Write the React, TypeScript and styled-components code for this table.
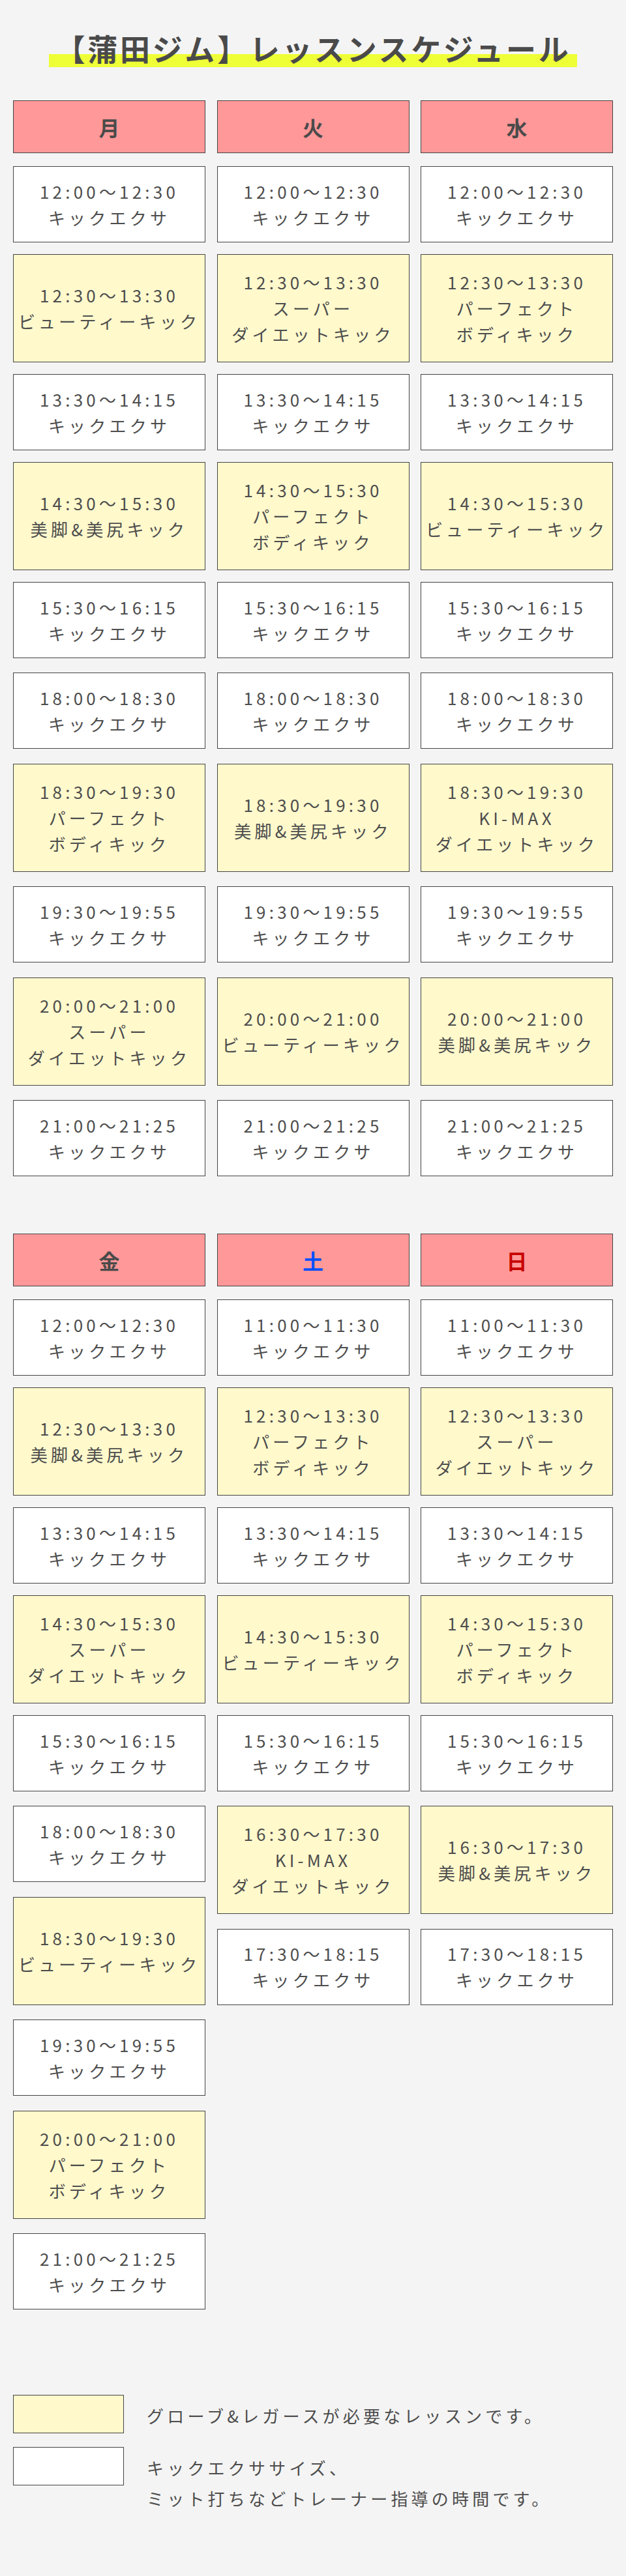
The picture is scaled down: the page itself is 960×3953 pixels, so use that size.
import styled, { createGlobalStyle } from "styled-components";

type Lesson = {
  time: string;
  name: string[];
  glove?: boolean;
};

type Day = {
  label: string;
  tone?: "sat" | "sun";
  day: Lesson[];
  night: Lesson[];
};

const exa = (time: string): Lesson => ({ time, name: ["キックエクサ"] });
const kick = (time: string, ...name: string[]): Lesson => ({ time, name, glove: true });

const BEAUTY = ["ビューティーキック"];
const LEGS = ["美脚&美尻キック"];
const SUPER = ["スーパー", "ダイエットキック"];
const PERFECT = ["パーフェクト", "ボディキック"];
const KIMAX = ["KI-MAX", "ダイエットキック"];

const weekdays: Day[] = [
  {
    label: "月",
    day: [exa("12:00〜12:30"), kick("12:30〜13:30", ...BEAUTY), exa("13:30〜14:15"), kick("14:30〜15:30", ...LEGS), exa("15:30〜16:15")],
    night: [exa("18:00〜18:30"), kick("18:30〜19:30", ...PERFECT), exa("19:30〜19:55"), kick("20:00〜21:00", ...SUPER), exa("21:00〜21:25")],
  },
  {
    label: "火",
    day: [exa("12:00〜12:30"), kick("12:30〜13:30", ...SUPER), exa("13:30〜14:15"), kick("14:30〜15:30", ...PERFECT), exa("15:30〜16:15")],
    night: [exa("18:00〜18:30"), kick("18:30〜19:30", ...LEGS), exa("19:30〜19:55"), kick("20:00〜21:00", ...BEAUTY), exa("21:00〜21:25")],
  },
  {
    label: "水",
    day: [exa("12:00〜12:30"), kick("12:30〜13:30", ...PERFECT), exa("13:30〜14:15"), kick("14:30〜15:30", ...BEAUTY), exa("15:30〜16:15")],
    night: [exa("18:00〜18:30"), kick("18:30〜19:30", ...KIMAX), exa("19:30〜19:55"), kick("20:00〜21:00", ...LEGS), exa("21:00〜21:25")],
  },
];

const weekend: Day[] = [
  {
    label: "金",
    day: [exa("12:00〜12:30"), kick("12:30〜13:30", ...LEGS), exa("13:30〜14:15"), kick("14:30〜15:30", ...SUPER), exa("15:30〜16:15")],
    night: [exa("18:00〜18:30"), kick("18:30〜19:30", ...BEAUTY), exa("19:30〜19:55"), kick("20:00〜21:00", ...PERFECT), exa("21:00〜21:25")],
  },
  {
    label: "土",
    tone: "sat",
    day: [exa("11:00〜11:30"), kick("12:30〜13:30", ...PERFECT), exa("13:30〜14:15"), kick("14:30〜15:30", ...BEAUTY), exa("15:30〜16:15")],
    night: [kick("16:30〜17:30", ...KIMAX), exa("17:30〜18:15")],
  },
  {
    label: "日",
    tone: "sun",
    day: [exa("11:00〜11:30"), kick("12:30〜13:30", ...SUPER), exa("13:30〜14:15"), kick("14:30〜15:30", ...PERFECT), exa("15:30〜16:15")],
    night: [kick("16:30〜17:30", ...LEGS), exa("17:30〜18:15")],
  },
];

const GlobalStyle = createGlobalStyle`
  html, body {
    margin: 0;
    padding: 0;
    background: #f4f4f4;
  }
  body {
    font-family: "Noto Sans CJK JP", "Noto Sans", sans-serif;
    color: #4d4d4d;
  }
`;

const Page = styled.div`
  width: 960px;
  box-sizing: border-box;
  padding: 0 20px 95px;
`;

const Title = styled.h1`
  margin: 43px 0 0;
  text-align: center;
  font-size: 46px;
  line-height: 60px;
  font-weight: 700;
  color: #4a4a4a;
  letter-spacing: 0.08em;
`;

const Marker = styled.span`
  padding: 0 10px;
  background: linear-gradient(
    transparent 65%,
    #efff37 65%,
    #efff37 95%,
    transparent 95%
  );
`;

const Week = styled.section<{ $top: number }>`
  display: grid;
  grid-template-columns: repeat(3, 1fr);
  column-gap: 17.5px;
  align-items: start;
  margin-top: ${(p) => p.$top}px;
`;

const Column = styled.div`
  display: flex;
  flex-direction: column;
`;

const DayHead = styled.div<{ $tone?: "sat" | "sun" }>`
  height: 81px;
  box-sizing: border-box;
  border: 1px solid #444;
  background: #ff9898;
  display: flex;
  align-items: center;
  justify-content: center;
  font-size: 32px;
  font-weight: 700;
  color: ${(p) => (p.$tone === "sat" ? "#0050ff" : p.$tone === "sun" ? "#c80000" : "#4a4a4a")};
`;

const Slots = styled.div`
  margin-top: 20px;
  display: flex;
  flex-direction: column;
  gap: 22px;
`;

const Block = styled.div<{ $gap: number }>`
  display: flex;
  flex-direction: column;
  gap: ${(p) => p.$gap}px;
`;

const Cell = styled.div<{ $glove?: boolean }>`
  height: ${(p) => (p.$glove ? 166 : 117)}px;
  box-sizing: border-box;
  border: 1px solid #444;
  background: ${(p) => (p.$glove ? "#fff9cc" : "#ffffff")};
  display: flex;
  flex-direction: column;
  align-items: center;
  justify-content: center;
  text-align: center;
  font-size: 26px;
  line-height: 40px;
  letter-spacing: 0.2em;
  white-space: nowrap;
`;

const Line = styled.span`
  display: block;
`;

const Legend = styled.div`
  margin-top: 131px;
  display: flex;
  flex-direction: column;
  gap: 20.5px;
`;

const LegendRow = styled.div`
  display: flex;
  align-items: flex-start;
  gap: 35px;
`;

const Swatch = styled.div<{ $glove?: boolean }>`
  width: 170px;
  height: 59px;
  flex: none;
  box-sizing: border-box;
  border: 1px solid #444;
  background: ${(p) => (p.$glove ? "#fff9cc" : "#ffffff")};
`;

const LegendText = styled.p`
  margin: 8px 0 0;
  font-size: 26px;
  line-height: 47px;
  letter-spacing: 0.2em;
`;

function LessonCell({ lesson }: { lesson: Lesson }) {
  return (
    <Cell $glove={lesson.glove}>
      <Line>{lesson.time}</Line>
      {lesson.name.map((n) => (
        <Line key={n}>{n}</Line>
      ))}
    </Cell>
  );
}

function DayColumn({ day }: { day: Day }) {
  return (
    <Column>
      <DayHead $tone={day.tone}>{day.label}</DayHead>
      <Slots>
        <Block $gap={18}>
          {day.day.map((l) => (
            <LessonCell key={l.time} lesson={l} />
          ))}
        </Block>
        <Block $gap={22.5}>
          {day.night.map((l) => (
            <LessonCell key={l.time} lesson={l} />
          ))}
        </Block>
      </Slots>
    </Column>
  );
}

function App() {
  return (
    <Page>
      <GlobalStyle />
      <Title>
        <Marker>【蒲田ジム】レッスンスケジュール</Marker>
      </Title>

      <Week $top={51}>
        {weekdays.map((d) => (
          <DayColumn key={d.label} day={d} />
        ))}
      </Week>

      <Week $top={88}>
        {weekend.map((d) => (
          <DayColumn key={d.label} day={d} />
        ))}
      </Week>

      <Legend>
        <LegendRow>
          <Swatch $glove />
          <LegendText>グローブ&amp;レガースが必要なレッスンです。</LegendText>
        </LegendRow>
        <LegendRow>
          <Swatch />
          <LegendText>
            キックエクササイズ、
            <br />
            ミット打ちなどトレーナー指導の時間です。
          </LegendText>
        </LegendRow>
      </Legend>
    </Page>
  );
}

export default App;
